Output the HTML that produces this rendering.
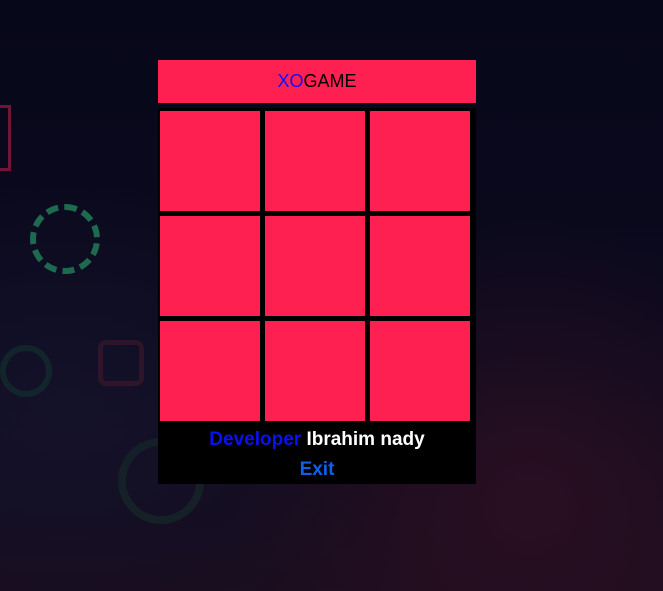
<!DOCTYPE html>
<html><head><meta charset="utf-8"><style>
html,body{margin:0;width:663px;height:591px;overflow:hidden;background:#08081a;font-family:"Liberation Sans",sans-serif;}
.bg{position:absolute;inset:0;background:radial-gradient(ellipse at 80% 85%,#2a0f22 0,transparent 40%),radial-gradient(ellipse at 10% 70%,#14122a 0,transparent 40%),linear-gradient(#07071a,#0c0a1e 60%,#1a0d1e);}
.ring{position:absolute;border-radius:50%;}
.hdr{position:absolute;left:158px;top:60px;width:318px;height:43px;background:#fe2050;text-align:center;line-height:43px;font-size:18px;color:#000;}
.hdr b{font-weight:normal;color:#1010ff}
.board{position:absolute;left:158px;top:108px;width:318px;height:376px;background:#000;}
.c{position:absolute;width:100px;height:100px;background:#fe2050;}
.ft{position:absolute;left:0;top:318px;width:318px;text-align:center;font-weight:bold;font-size:19px;}
</style></head><body>
<div class="bg"></div>
<div class="ring" style="left:30px;top:204px;width:58px;height:58px;border:6px dashed #1d6a4e;"></div>
<div class="ring" style="left:0px;top:345px;width:40px;height:40px;border:6px solid #123a30;opacity:.5"></div>
<div class="ring" style="left:118px;top:438px;width:70px;height:70px;border:8px solid #163a2c;opacity:.4"></div>
<div style="position:absolute;left:98px;top:340px;width:36px;height:36px;border:5px solid #4a1a2c;border-radius:8px;opacity:.5"></div>
<div style="position:absolute;left:0;top:105px;width:8px;height:60px;border:3px solid #8a1a3a;border-left:none;opacity:.8"></div>
<div class="hdr"><b>XO</b>GAME</div>
<div class="board">
<div class="c" style="left:2px;top:3px"></div><div class="c" style="left:107px;top:3px"></div><div class="c" style="left:212px;top:3px"></div>
<div class="c" style="left:2px;top:108px"></div><div class="c" style="left:107px;top:108px"></div><div class="c" style="left:212px;top:108px"></div>
<div class="c" style="left:2px;top:213px"></div><div class="c" style="left:107px;top:213px"></div><div class="c" style="left:212px;top:213px"></div>
<div class="ft" style="top:321px"><span style="color:#0a10f5">Developer</span> <span style="color:#fff">Ibrahim nady</span></div>
<div class="ft" style="top:351px;color:#1060f0">Exit</div>
</div>
</body></html>
